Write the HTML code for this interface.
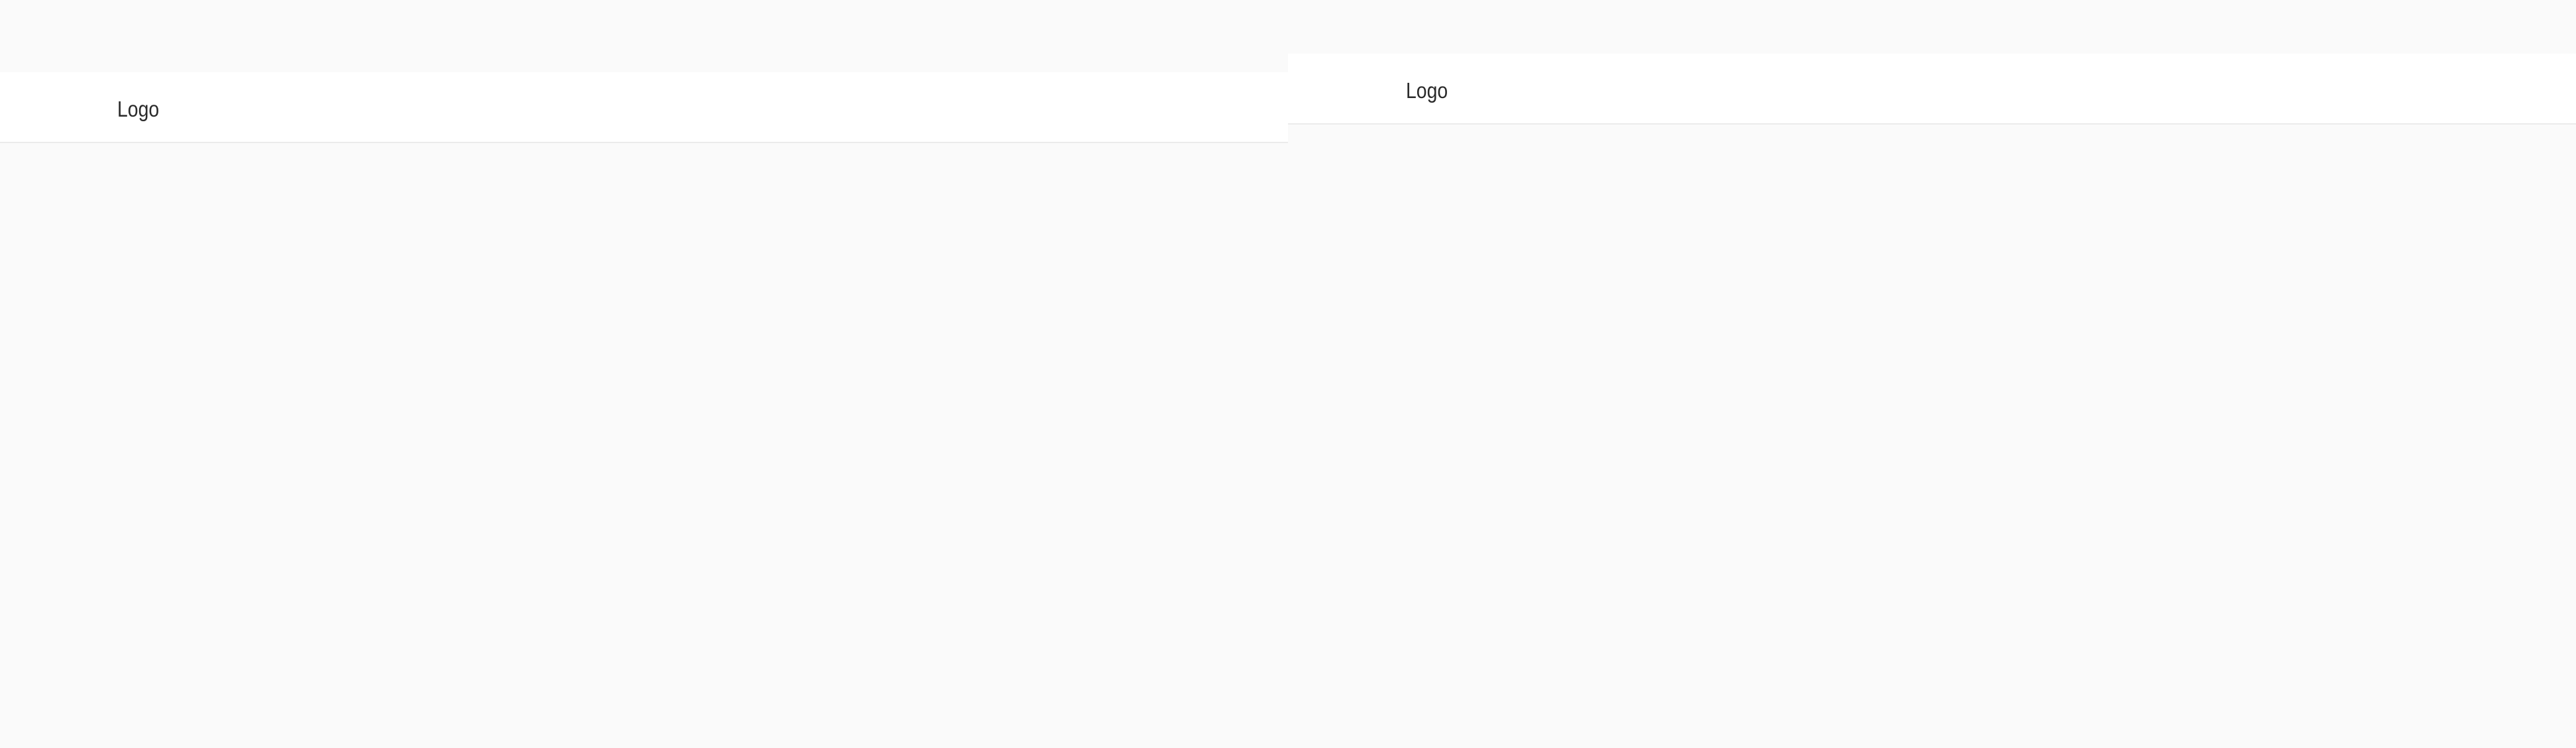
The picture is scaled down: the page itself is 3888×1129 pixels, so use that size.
<!DOCTYPE html>
<html><head><style>
html,body{margin:0;padding:0;width:3888px;height:1129px;background:#fafafa;overflow:hidden;font-family:"Liberation Sans",sans-serif;}
.p{position:absolute;top:0;height:1129px;width:1944px;background:#fafafa;}
.h{position:absolute;left:0;right:0;background:#fff;border-bottom:2px solid #ebebeb;}
.l{position:absolute;font-size:33px;color:#2a2a2a;line-height:1;transform:scaleX(0.86);transform-origin:0 0;}
</style></head><body>
<div class="p" style="left:0">
 <div class="h" style="top:109px;height:105px"></div>
 <div class="l" style="left:177px;top:148px">Logo</div>
</div>
<div class="p" style="left:1944px">
 <div class="h" style="top:81px;height:105px"></div>
 <div class="l" style="left:178px;top:120px">Logo</div>
</div>
</body></html>
